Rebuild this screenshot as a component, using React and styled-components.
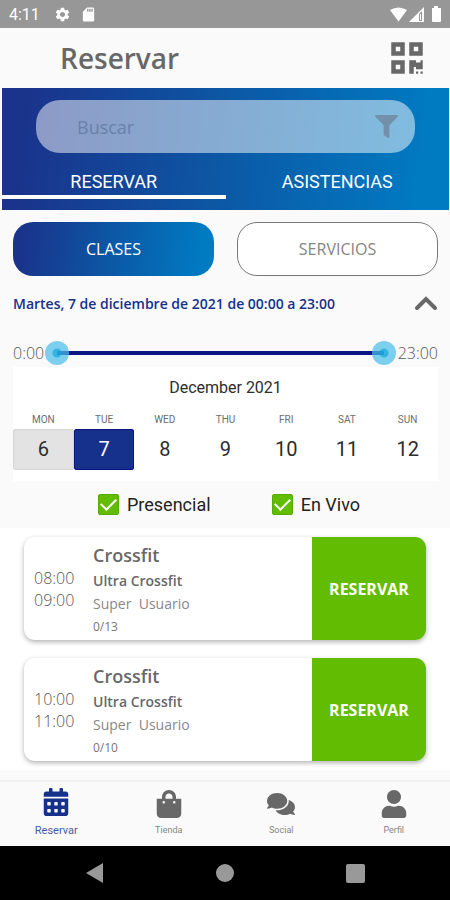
import React, { useState } from "react";
import styled, { createGlobalStyle, ThemeProvider } from "styled-components";
import {
	FaCalendarAlt,
	FaComments,
	FaFilter,
	FaQrcode,
	FaShoppingBag,
	FaUser
} from "react-icons/fa";
import { MdSdCard, MdSettings } from "react-icons/md";

const theme = {
	navy: "#15318c",
	darknavy: "#0a1583",
	gradient: "linear-gradient(96deg, #1a338b 5%, #0d55a3 46%, #007bc2 94%)",
	green: "#62bc02",
	page: "#fafafa",
	grey: "#686868",
	text: "'Open Sans', 'Noto Sans', sans-serif",
	system: "Roboto, 'Liberation Sans', sans-serif"
};

const GlobalStyle = createGlobalStyle`
	* {
		box-sizing: border-box;
	}

	body {
		margin: 0;
		background: #fafafa;
	}

	button,
	input {
		margin: 0;
		padding: 0;
		border: none;
		background: none;
		font: inherit;
		color: inherit;
	}

	button {
		cursor: pointer;
	}
`;

const Screen = styled.div`
	min-height: 100vh;
	display: flex;
	flex-direction: column;

	font-family: ${props => props.theme.text};
	color: ${props => props.theme.grey};
	background: ${props => props.theme.page};
`;

const StatusBar = styled.div`
	height: 28px;
	padding: 0 8px 0 9px;
	display: flex;
	align-items: center;
	justify-content: space-between;

	color: #fff;
	background: #979797;

	font-family: ${props => props.theme.system};
	font-size: 16px;
`;

const StatusGroup = styled.div`
	display: flex;
	align-items: center;
	gap: ${props => props.gap};
`;

const Clock = styled.span`
	margin-right: 5px;
`;

const Header = styled.header`
	height: 60px;
	padding: 0 25px 0 60px;
	display: flex;
	align-items: center;
	justify-content: space-between;

	h1 {
		margin: 0;
		font-size: 28px;
		font-weight: 600;
		line-height: 32px;
	}
`;

const IconButton = styled.button`
	display: flex;
	color: ${props => props.color || props.theme.grey};
`;

const Banner = styled.section`
	margin: 0 1px 0 2px;
	padding: 12px 0 11px;

	background: ${props => props.theme.gradient};
`;

const SearchBox = styled.form`
	height: 53px;
	margin: 0 34px;
	padding: 0 17px 0 41px;
	display: flex;
	align-items: center;

	background: rgba(255, 255, 255, 0.5);
	border-radius: 24px;
`;

const SearchInput = styled.input`
	flex: 1;
	min-width: 0;
	outline: none;

	font-size: 18px;

	&::placeholder {
		color: #6782a9;
		opacity: 1;
	}
`;

const Tabs = styled.div`
	display: grid;
	grid-template-columns: 1fr 1fr;
`;

const Tab = styled.button`
	height: 46px;
	padding-top: 14px;

	color: #fff;
	border-bottom: 4px solid ${props => (props.$active ? "#fff" : "transparent")};

	font-family: ${props => props.theme.system};
	font-size: 18px;
`;

const Kinds = styled.div`
	padding: 12px 12px 0 13px;
	display: grid;
	grid-template-columns: 1fr 1fr;
	gap: 23px;
`;

const Kind = styled.button`
	height: 54px;

	color: ${props => (props.$active ? "#fff" : "#858585")};
	background: ${props => (props.$active ? props.theme.gradient : "#fff")};
	border: ${props => (props.$active ? "none" : "1px solid #777")};
	border-radius: 20px;

	font-size: 16px;
`;

const DateRow = styled.div`
	height: 54px;
	padding: 0 12px 0 13px;
	display: flex;
	align-items: center;
	justify-content: space-between;

	color: ${props => props.theme.navy};

	font-size: 14px;
	font-weight: 600;
`;

const HourRow = styled.div`
	height: 29px;
	margin: 8px 12px 0 13px;
	display: flex;
	align-items: center;

	color: #555;

	font-size: 16px;
	font-weight: 300;
`;

const Range = styled.div`
	flex: 1;
	height: 24px;
	margin: 0 2px 0 1px;
	display: grid;
	align-items: center;

	&::before {
		content: "";
		grid-area: 1 / 1;
		height: 4px;
		margin: 0 12px;
		background: ${props => props.theme.darknavy};
	}
`;

const Thumb = styled.input`
	grid-area: 1 / 1;
	width: 100%;
	height: 24px;
	z-index: 1;
	appearance: none;
	pointer-events: none;

	&::-webkit-slider-thumb {
		appearance: none;
		width: 24px;
		height: 24px;
		pointer-events: auto;
		border-radius: 50%;
		background: radial-gradient(
			circle,
			rgba(30, 172, 222, 0.9) 4px,
			rgba(75, 190, 232, 0.72) 5px
		);
	}
`;

const Calendar = styled.section`
	margin: 0 12px 0 13px;
	padding: 10px 0 11px;

	color: #2d2d2d;
	background: #fff;

	font-family: ${props => props.theme.system};

	h2 {
		margin: 0;
		font-size: 16px;
		font-weight: 400;
		line-height: 22px;
		text-align: center;
	}
`;

const Week = styled.div`
	padding-top: 14px;
	display: grid;
	grid-template-columns: repeat(7, 1fr);
`;

const Day = styled.button`
	display: grid;
	grid-template-rows: 16px 41px;
	align-items: center;

	font-size: 20px;

	small {
		padding-bottom: 4px;
		color: #6d6d6d;
		font-size: 10px;
	}

	span {
		line-height: 41px;
		border-radius: 3px;
		color: ${props => (props.$selected ? "#fff" : "inherit")};
		background: ${props =>
			props.$selected
				? props.theme.navy
				: props.$marked
				? "#e3e3e3"
				: "transparent"};
		box-shadow: inset 0 0 0 1px
			${props =>
				props.$selected
					? props.theme.darknavy
					: props.$marked
					? "#d6d6d6"
					: "transparent"};
	}
`;

const Filters = styled.div`
	height: 47px;
	padding: 0 90px 0 98px;
	display: flex;
	align-items: center;
	justify-content: space-between;

	color: #222;

	font-family: ${props => props.theme.system};
	font-size: 18px;
`;

const CheckLabel = styled.label`
	display: flex;
	align-items: center;
	gap: 8px;
`;

const Check = styled.input`
	width: 21px;
	height: 21px;
	display: grid;
	place-items: center;
	appearance: none;

	border: 1px solid #56aa04;
	border-radius: 2px;

	&:checked {
		background: ${props => props.theme.green};
	}

	&:checked::after {
		content: "";
		width: 7px;
		height: 13px;
		margin-bottom: 4px;
		border: solid #fff;
		border-width: 0 2px 2px 0;
		transform: rotate(45deg);
	}
`;

const ClassList = styled.ul`
	margin: 0;
	padding: 9px 24px;
	display: grid;
	gap: 18px;

	list-style: none;
	background: #fff;
`;

const ClassCard = styled.li`
	min-height: 103px;
	display: grid;
	grid-template-columns: 69px 1fr 114px;
	overflow: hidden;

	background: #fff;
	border-radius: 11px;
	box-shadow: 0 2px 5px rgba(0, 0, 0, 0.3);
`;

const Hours = styled.div`
	align-self: center;
	padding-left: 10px;

	color: #555;

	font-size: 16px;
	font-weight: 300;
	line-height: 22px;
`;

const Details = styled.div`
	padding-top: 5px;
	font-size: 14px;
	line-height: 23px;

	h3,
	p {
		margin: 0;
	}

	h3 {
		font-size: 18px;
		font-weight: 600;
		line-height: 27px;
	}
`;

const Subtitle = styled.p`
	font-weight: 600;
`;

const Teacher = styled.p`
	color: #888;
	white-space: pre;
`;

const Places = styled.p`
	color: #777;
	font-size: 12px;
	line-height: 24px;
`;

const Book = styled.button`
	color: #fff;
	background: ${props => props.theme.green};

	font-size: 16px;
	font-weight: 700;
`;

const TabBar = styled.nav`
	height: 66px;
	margin-top: auto;
	display: grid;
	grid-template-columns: repeat(4, 1fr);

	border-top: 2px solid #f0f0f0;
`;

const TabLink = styled.a`
	padding-top: ${props => (props.$active ? "6px" : "8px")};
	display: flex;
	flex-direction: column;
	align-items: center;
	gap: ${props => (props.$active ? "7px" : "5px")};

	color: ${props => (props.$active ? props.theme.navy : props.theme.grey)};

	font-family: ${props => props.theme.system};
	font-size: ${props => (props.$active ? "11px" : "9px")};
	line-height: 15px;
	text-decoration: none;

	span {
		opacity: 0.8;
	}
`;

const SystemBar = styled.div`
	height: 54px;
	padding: 0 85px;
	display: flex;
	align-items: center;
	justify-content: space-between;

	background: #000;
`;

const days = [
	["MON", 6],
	["TUE", 7],
	["WED", 8],
	["THU", 9],
	["FRI", 10],
	["SAT", 11],
	["SUN", 12]
];

const classes = [
	{ id: 1, start: "08:00", end: "09:00", places: "0/13" },
	{ id: 2, start: "10:00", end: "11:00", places: "0/10" }
];

const links = [
	{ name: "Reservar", icon: FaCalendarAlt },
	{ name: "Tienda", icon: FaShoppingBag },
	{ name: "Social", icon: FaComments },
	{ name: "Perfil", icon: FaUser }
];

function Status() {
	return (
		<StatusBar>
			<StatusGroup gap="9px">
				<Clock>4:11</Clock>
				<MdSettings size={17} />
				<MdSdCard size={17} />
			</StatusGroup>
			<StatusGroup gap="2px">
				<svg width="17" height="15" viewBox="0 0 17 15" fill="#fff">
					<path d="M0 3Q8.500-2 17 3L8.500 14.500Z" />
				</svg>
				<svg width="15" height="15" viewBox="0 0 15 15">
					<path d="M0 15L15 0V15Z" fill="#fff" />
					<path d="M10 14V7L13 4V14Z" fill="#979797" />
					<path d="M11.500 7V13" stroke="#fff" />
				</svg>
				<svg width="16" height="16" viewBox="0 0 16 16" fill="#fff">
					<path d="M8 0h4v2h3v13q0 1-1 1H7q-1 0-1-1V2h2z" />
				</svg>
			</StatusGroup>
		</StatusBar>
	);
}

function HourRange() {
	const [from, setFrom] = useState(0);
	const [to, setTo] = useState(23);

	return (
		<HourRow>
			<span>{from}:00</span>
			<Range>
				<Thumb
					type="range"
					aria-label="Desde"
					min="0"
					max="23"
					value={from}
					onChange={e => setFrom(Math.min(Number(e.target.value), to))}
				/>
				<Thumb
					type="range"
					aria-label="Hasta"
					min="0"
					max="23"
					value={to}
					onChange={e => setTo(Math.max(Number(e.target.value), from))}
				/>
			</Range>
			<span>{to}:00</span>
		</HourRow>
	);
}

export default function App() {
	const [tab, setTab] = useState("RESERVAR");
	const [kind, setKind] = useState("CLASES");
	const [day, setDay] = useState(7);

	return (
		<ThemeProvider theme={theme}>
			<GlobalStyle />
			<Screen>
				<Status />
				<Header>
					<h1>Reservar</h1>
					<IconButton type="button" aria-label="QR">
						<FaQrcode size={36} />
					</IconButton>
				</Header>

				<Banner>
					<SearchBox onSubmit={e => e.preventDefault()}>
						<SearchInput type="text" aria-label="Buscar" placeholder="Buscar" />
						<IconButton type="button" aria-label="Filtrar" color="#7290aa">
							<FaFilter size={23} />
						</IconButton>
					</SearchBox>
					<Tabs>
						{["RESERVAR", "ASISTENCIAS"].map(name => (
							<Tab
								key={name}
								type="button"
								$active={tab === name}
								onClick={() => setTab(name)}
							>
								{name}
							</Tab>
						))}
					</Tabs>
				</Banner>

				<Kinds>
					{["CLASES", "SERVICIOS"].map(name => (
						<Kind
							key={name}
							type="button"
							$active={kind === name}
							onClick={() => setKind(name)}
						>
							{name}
						</Kind>
					))}
				</Kinds>

				<DateRow>
					<span>Martes, 7 de diciembre de 2021 de 00:00 a 23:00</span>
					<IconButton type="button" aria-label="Ocultar">
						<svg
							width="24"
							height="16"
							viewBox="0 0 24 16"
							fill="none"
							stroke="currentColor"
							strokeWidth="4"
							strokeLinecap="round"
						>
							<path d="M3 13L12 4L21 13" />
						</svg>
					</IconButton>
				</DateRow>

				<HourRange />

				<Calendar>
					<h2>December 2021</h2>
					<Week>
						{days.map(([name, number]) => (
							<Day
								key={number}
								type="button"
								$selected={day === number}
								$marked={number === 6}
								onClick={() => setDay(number)}
							>
								<small>{name}</small>
								<span>{number}</span>
							</Day>
						))}
					</Week>
				</Calendar>

				<Filters>
					<CheckLabel>
						<Check type="checkbox" defaultChecked />
						Presencial
					</CheckLabel>
					<CheckLabel>
						<Check type="checkbox" defaultChecked />
						En Vivo
					</CheckLabel>
				</Filters>

				<ClassList>
					{classes.map(item => (
						<ClassCard key={item.id}>
							<Hours>
								<div>{item.start}</div>
								<div>{item.end}</div>
							</Hours>
							<Details>
								<h3>Crossfit</h3>
								<Subtitle>Ultra Crossfit</Subtitle>
								<Teacher>{"Super  Usuario"}</Teacher>
								<Places>{item.places}</Places>
							</Details>
							<Book type="button">RESERVAR</Book>
						</ClassCard>
					))}
				</ClassList>

				<TabBar>
					{links.map(({ name, icon: Icon }, i) => (
						<TabLink key={name} href={"#" + name} $active={i === 0}>
							<Icon size={28} />
							<span>{name}</span>
						</TabLink>
					))}
				</TabBar>

				<SystemBar>
					<IconButton type="button" aria-label="Back" color="#999">
						<svg width="18" height="20" viewBox="0 0 18 20" fill="currentColor">
							<path d="M18 0V20L1 10Z" />
						</svg>
					</IconButton>
					<IconButton type="button" aria-label="Home" color="#999">
						<svg width="18" height="18" viewBox="0 0 18 18" fill="currentColor">
							<circle cx="9" cy="9" r="9" />
						</svg>
					</IconButton>
					<IconButton type="button" aria-label="Recents" color="#999">
						<svg width="19" height="19" viewBox="0 0 19 19" fill="currentColor">
							<rect width="19" height="19" rx="2" />
						</svg>
					</IconButton>
				</SystemBar>
			</Screen>
		</ThemeProvider>
	);
}
